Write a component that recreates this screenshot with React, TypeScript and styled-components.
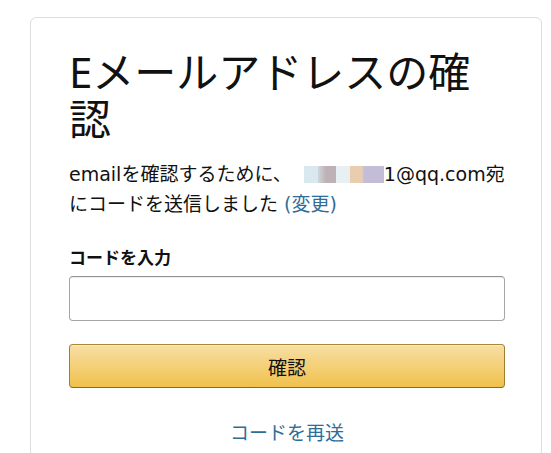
import React, { FC } from 'react';
import styled, { createGlobalStyle } from 'styled-components';

const GlobalStyle = createGlobalStyle`
  html, body {
    margin: 0;
    padding: 0;
    background: #fff;
    overflow: hidden;
  }
  body {
    font-family: "DejaVu Sans", "Noto Sans CJK JP", sans-serif;
    color: #111;
  }
`;

const Page = styled.div`
  width: 551px;
  height: 453px;
  padding: 17px 0 0 30px;
  box-sizing: border-box;
  overflow: hidden;
`;

const Card = styled.div`
  width: 512px;
  min-height: 520px;
  box-sizing: border-box;
  border: 1px solid #ddd;
  border-radius: 6px;
  padding: 30px 36px 0 38px;
  display: flex;
  flex-direction: column;
`;

const Title = styled.h1`
  margin: 0;
  font-size: 42px;
  font-weight: 400;
  line-height: 47px;
  color: #111;
  font-family: "Noto Sans", "Noto Sans CJK JP", sans-serif;
`;

const Message = styled.p`
  margin: 17px 0 0;
  font-size: 19px;
  line-height: 30px;
  color: #111;
`;

// blurred part of the address
const Masked = styled.span`
  display: inline-block;
  width: 92px;
  height: 17px;
  vertical-align: -2px;
  background: linear-gradient(
    to right,
    #fff 0,
    #fff 12px,
    #d3e3ec 12px,
    #d3e3ec 26px,
    #c7cfd6 26px,
    #b3a4a8 34px,
    #b3a4a8 44px,
    #e4edf1 44px,
    #e4edf1 58px,
    #e5c4a0 58px,
    #e5c4a0 70px,
    #b9b1cf 72px,
    #b9b1cf 92px
  );
  opacity: 0.85;
`;

const Link = styled.a`
  color: #2f6d97;
  text-decoration: none;
  cursor: pointer;
`;

const Label = styled.label`
  display: block;
  margin-top: 27px;
  font-size: 17px;
  font-weight: 700;
  line-height: 24px;
  color: #111;
`;

const Input = styled.input`
  display: block;
  margin-top: 6px;
  width: 100%;
  height: 45px;
  box-sizing: border-box;
  border: 1px solid #a6a6a6;
  border-top-color: #949494;
  border-radius: 4px;
  box-shadow: 0 1px 0 rgba(255, 255, 255, 0.5), 0 1px 0 rgba(0, 0, 0, 0.07) inset;
  padding: 0 10px;
  font-size: 19px;
  outline: none;
`;

const Button = styled.button`
  margin-top: 23px;
  width: 100%;
  height: 44px;
  box-sizing: border-box;
  border: 1px solid;
  border-color: #a88734 #9c7e31 #846a29;
  border-radius: 4px;
  background: linear-gradient(to bottom, #f7dfa5, #f0c14b);
  box-shadow: 0 1px 0 rgba(255, 255, 255, 0.4) inset;
  font-family: "DejaVu Sans", "Noto Sans CJK JP", sans-serif;
  font-size: 19px;
  color: #111;
  cursor: pointer;
`;

const Resend = styled(Link)`
  align-self: center;
  margin-top: 33px;
  font-size: 19px;
  line-height: 24px;
`;

const App: FC = () => {
  return (
    <>
      <GlobalStyle />
      <Page>
        <Card>
          <Title>Eメールアドレスの確認</Title>
          <Message>
            <span>emailを確認するために、</span>
            <Masked />
            <span>1@qq.com宛</span>
            <span>にコードを送信しました </span>
            <Link>(変更)</Link>
          </Message>
          <Label htmlFor="code">コードを入力</Label>
          <Input id="code" type="text" />
          <Button type="button">確認</Button>
          <Resend>コードを再送</Resend>
        </Card>
      </Page>
    </>
  );
};

export default App;
